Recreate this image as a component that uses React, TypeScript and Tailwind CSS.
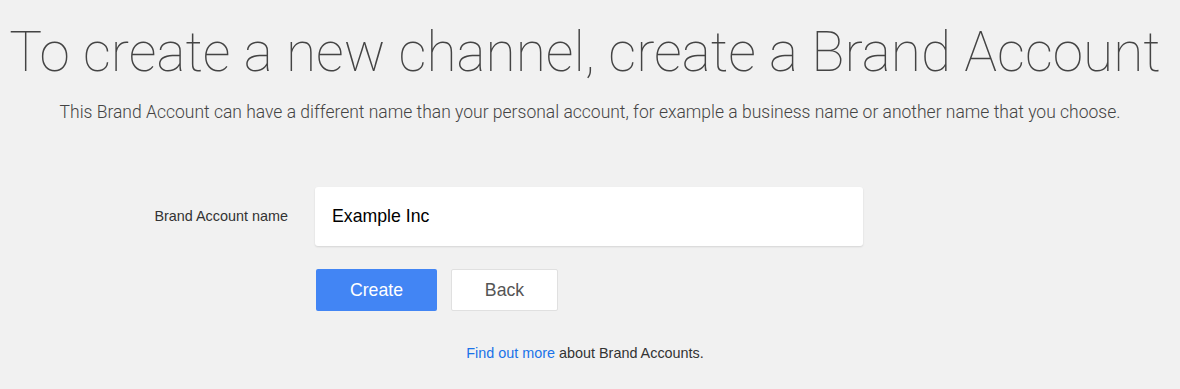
export default function App() {
  return (
    <div className="min-h-[389px] w-full bg-[#f1f1f1]">
      <div className="pt-[20px] text-center">
        <h1 className="whitespace-nowrap pr-[10px] font-['Roboto',sans-serif] text-[55px] font-thin leading-[64px] text-[#444]">
          To create a new channel, create a Brand Account
        </h1>
        <p className="mt-[18px] font-['Roboto',sans-serif] text-[17.5px] font-light leading-[20px] text-[#444]">
          This Brand Account can have a different name than your personal account, for example a business name or another name that you choose.
        </p>
      </div>

      <div className="mt-[65px] font-['Liberation_Sans',Arial,sans-serif]">
        <div className="flex items-center">
          <label className="w-[315px] pr-[27px] text-right text-[14.4px] text-[#333]">Brand Account name</label>
          <div className="flex h-[59px] w-[548px] items-center rounded-[3px] bg-white px-[17px] text-[17.7px] text-black shadow-[0_1px_2px_rgba(0,0,0,0.12)]">
            Example Inc
          </div>
        </div>

        <div className="mt-[23px] flex gap-[14px] pl-[316px]">
          <button className="h-[42px] w-[121px] rounded-[2px] bg-[#4285f4] text-[17.7px] text-white">Create</button>
          <button className="h-[42px] w-[107px] rounded-[2px] border border-[#e0e0e0] bg-white text-[17.7px] text-[#555]">Back</button>
        </div>

        <p className="mt-[32px] pr-[10px] text-center text-[14.4px] text-[#333]">
          <span className="text-[#1a73e8]">Find out more</span> about Brand Accounts.
        </p>
      </div>
    </div>
  );
}
